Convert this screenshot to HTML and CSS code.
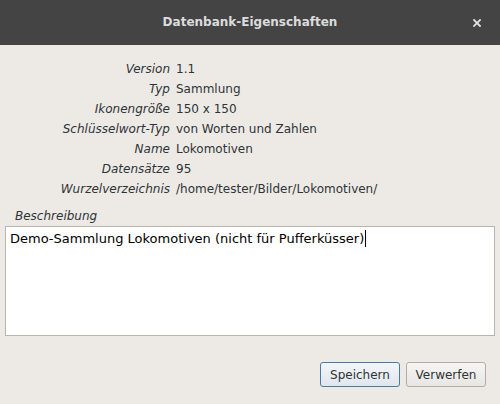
FILE: index.html
```html
<!DOCTYPE html>
<html lang="de">
<head>
<meta charset="utf-8">
<link rel="stylesheet" href="styles.css">
</head>
<body>
<div class="dialog">
  <header class="titlebar">
    <span class="title">Datenbank-Eigenschaften</span>
    <span class="close"><svg width="8" height="8" viewBox="0 0 8 8"><path d="M1 1 L7 7 M7 1 L1 7" stroke="#e0e0e0" stroke-width="1.8" stroke-linecap="square"/></svg></span>
  </header>
  <div class="props">
    <span class="k">Version</span><span class="v">1.1</span>
    <span class="k">Typ</span><span class="v">Sammlung</span>
    <span class="k">Ikonengröße</span><span class="v">150 x 150</span>
    <span class="k">Schlüsselwort-Typ</span><span class="v">von Worten und Zahlen</span>
    <span class="k">Name</span><span class="v">Lokomotiven</span>
    <span class="k">Datensätze</span><span class="v">95</span>
    <span class="k">Wurzelverzeichnis</span><span class="v">/home/tester/Bilder/Lokomotiven/</span>
  </div>
  <div class="desc-label">Beschreibung</div>
  <div class="textarea">Demo-Sammlung Lokomotiven (nicht für Pufferküsser)<span class="caret"></span></div>
  <div class="buttons">
    <button class="btn primary">Speichern</button>
    <button class="btn">Verwerfen</button>
  </div>
</div>
</body>
</html>
```
FILE: styles.css
```css
html, body {
  margin: 0;
  padding: 0;
  background: #edeae6;
}
body {
  width: 500px;
  height: 404px;
  overflow: hidden;
  font-family: "DejaVu Sans", sans-serif;
  font-size: 12px;
  color: #2e3436;
}
.dialog {
  display: flex;
  flex-direction: column;
}
.titlebar {
  height: 45px;
  background: #444444;
  display: flex;
  align-items: center;
  justify-content: center;
  position: relative;
}
.title {
  font-weight: bold;
  font-size: 12px;
  color: #dcdcdc;
  margin-top: -1px;
}
.close {
  position: absolute;
  left: 473px;
  top: 19px;
  width: 8px;
  height: 8px;
  display: flex;
}
.props {
  display: grid;
  grid-template-columns: 170px auto;
  column-gap: 6px;
  margin-top: 14px;
  line-height: 20px;
}
.k {
  text-align: right;
  font-style: italic;
}
.v {
  white-space: nowrap;
}
.desc-label {
  font-style: italic;
  margin: 8px 0 0 15px;
  line-height: 18px;
}
.textarea {
  margin: 1px 5px 0 5px;
  background: #ffffff;
  border: 1px solid #b8b5b1;
  padding: 3px 4px;
  font-size: 13px;
  line-height: 17px;
  color: #000000;
  box-sizing: border-box;
  height: 110px;
}
.caret {
  display: inline-block;
  width: 1px;
  height: 17px;
  background: #000;
  vertical-align: top;
  margin-left: 1px;
}
.buttons {
  display: flex;
  justify-content: flex-end;
  gap: 6px;
  margin: 26px 14px 0 0;
}
.btn {
  font-family: "DejaVu Sans", sans-serif;
  font-size: 12px;
  color: #2e3436;
  width: 80px;
  height: 25px;
  border: 1px solid #b0aca7;
  border-radius: 3px;
  background: linear-gradient(#f6f5f4, #e8e6e3);
  padding: 0;
}
.btn.primary {
  border-color: #4a7ba6;
  background: linear-gradient(#f3f6f9, #dfe6ed);
}
```
